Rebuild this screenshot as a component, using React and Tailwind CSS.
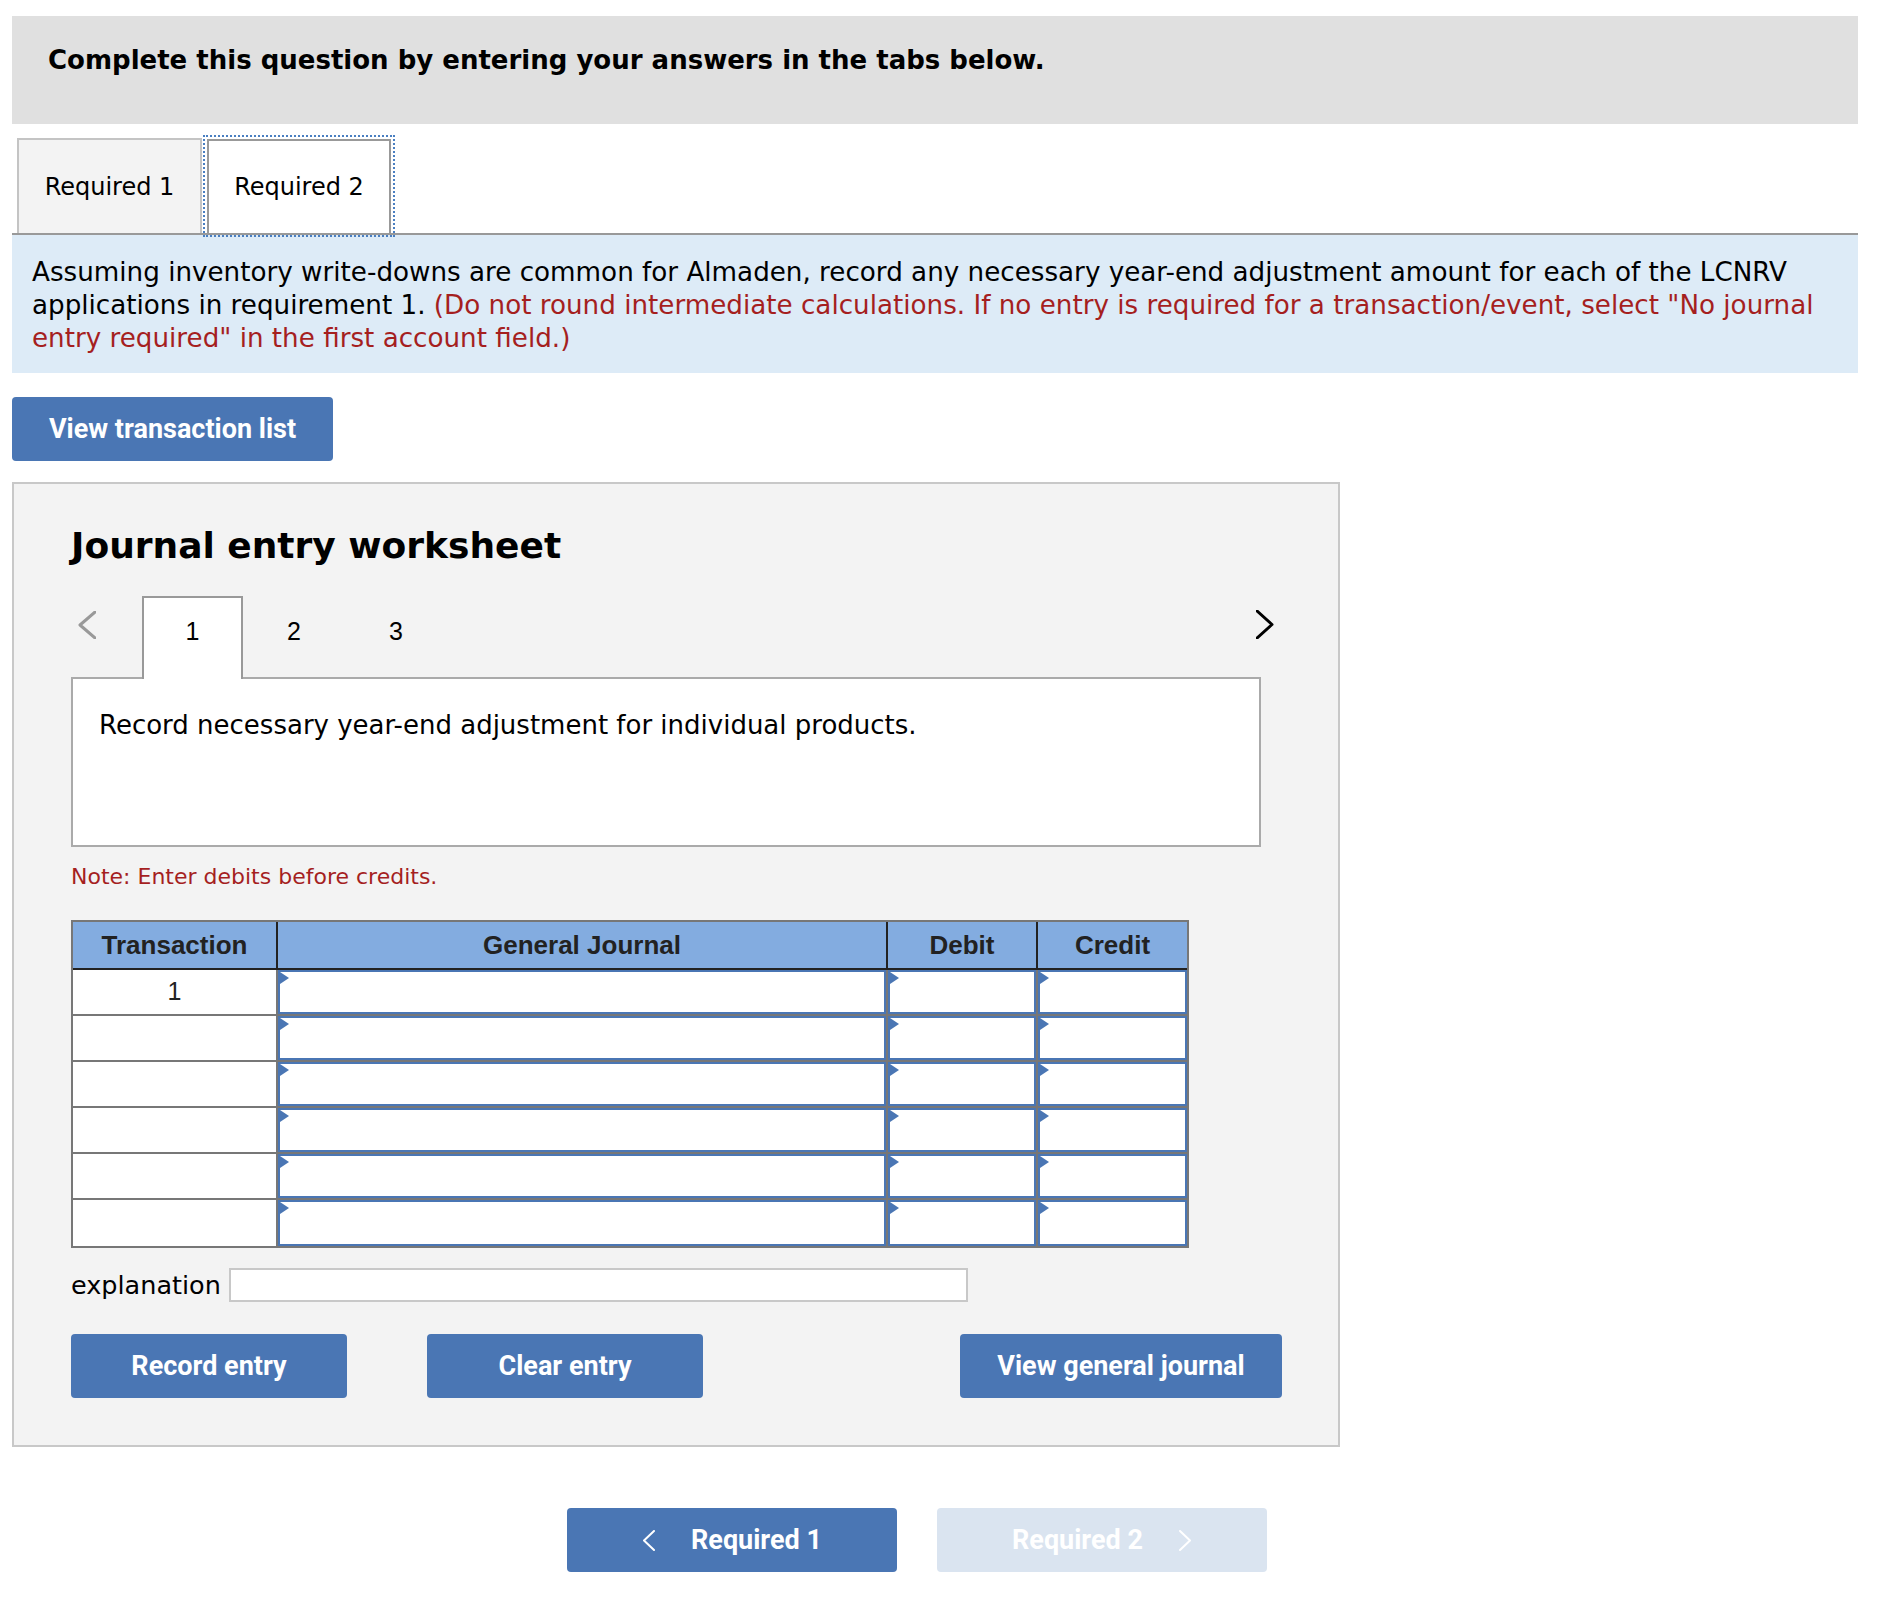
import React from 'react'

const BODY = "font-['DejaVu_Sans',Verdana,sans-serif]"
const BTN = "font-['Roboto',sans-serif] font-bold text-white text-[27px]"
const ARIAL = "font-['Liberation_Sans',Arial,sans-serif]"

function Chevron({ dir = 'left', className = '', w = 12, h = 20, sw = 2 }) {
  const d = dir === 'left'
    ? `M${w - 1} 1 L2 ${h / 2} L${w - 1} ${h - 1}`
    : `M1 1 L${w - 2} ${h / 2} L1 ${h - 1}`
  return (
    <svg width={w} height={h} viewBox={`0 0 ${w} ${h}`} className={className}>
      <path d={d} fill="none" stroke="currentColor" strokeWidth={sw} strokeLinecap="round" strokeLinejoin="round" />
    </svg>
  )
}

function InputCell({ width, last }) {
  return (
    <div className={`h-full bg-white ${last ? '' : 'border-r-2 border-[#777]'}`} style={{ width }}>
      <div className="relative h-full border-2 border-[#4a76b4] bg-white">
        <div className="absolute left-0 top-0 w-0 h-0 border-y-[6px] border-y-transparent border-l-[9px] border-l-[#4a76b4]" />
      </div>
    </div>
  )
}

function JournalTable() {
  const rows = [1, 2, 3, 4, 5, 6]
  return (
    <div className={`mt-[30px] w-[1118px] border-2 border-[#777] ${ARIAL}`}>
      <div className="flex h-[48px] bg-[#83ace0] border-b-2 border-[#222] text-[26px] font-bold text-[#222]">
        <div className="w-[205px] border-r-2 border-[#222] flex items-center justify-center">Transaction</div>
        <div className="w-[610px] border-r-2 border-[#222] flex items-center justify-center">General Journal</div>
        <div className="w-[150px] border-r-2 border-[#222] flex items-center justify-center">Debit</div>
        <div className="w-[149px] flex items-center justify-center">Credit</div>
      </div>
      {rows.map((r, i) => (
        <div key={r} className={`flex h-[46px] ${i < rows.length - 1 ? 'border-b-2 border-[#777]' : 'h-[44px]'}`}>
          <div className="w-[205px] h-full bg-white border-r-2 border-[#777] flex items-center justify-center text-[25px] text-[#222]">
            {i === 0 ? '1' : ''}
          </div>
          <InputCell width={610} />
          <InputCell width={150} />
          <InputCell width={149} last />
        </div>
      ))}
    </div>
  )
}

export default function App() {
  return (
    <div className={`min-h-[1602px] bg-white pl-[12px] pr-[20px] pt-[16px] pb-[29px] text-black ${BODY}`}>
      <div className="h-[108px] bg-[#e0e0e0] pl-[36px] pt-[29px] text-[26px] leading-[31px] font-bold">
        Complete this question by entering your answers in the tabs below.
      </div>

      <div className="mt-[14px] flex items-end pl-[5px] border-b-2 border-[#999] text-[24px]">
        <div className="w-[185px] h-[95px] bg-[#f3f3f3] border-2 border-b-0 border-[#c4c4c4] flex items-center justify-center">
          Required 1
        </div>
        <div className="ml-[5px] w-[184px] h-[94px] bg-white border-2 border-b-0 border-[#999] outline-2 outline-dotted outline-[#4a7fc1] outline-offset-[2px] flex items-center justify-center">
          Required 2
        </div>
      </div>

      <div className="bg-[#ddebf7] px-[20px] pt-[21px] pb-[18px] text-[26.2px] leading-[33px]">
        Assuming inventory write-downs are common for Almaden, record any necessary year-end adjustment amount for each of the LCNRV<br />
        applications in requirement 1. <span className="text-[#a51f1f]">(Do not round intermediate calculations. If no entry is required for a transaction/event, select "No journal<br />
        entry required" in the first account field.)</span>
      </div>

      <button className={`mt-[24px] w-[321px] h-[64px] rounded-[4px] bg-[#4a76b4] ${BTN}`}>
        View transaction list
      </button>

      <div className="mt-[21px] w-[1328px] border-2 border-[#c8c8c8] bg-[#f3f3f3] pl-[57px] pt-[40px] pb-[47px]">
        <div className="text-[36px] leading-[44px] font-bold">Journal entry worksheet</div>

        <div className={`mt-[28px] flex items-end w-[1205px] ${ARIAL} text-[25px]`}>
          <div className="w-[71px] h-[81px] flex items-start pt-[15px] pl-[7px] text-[#999]">
            <Chevron dir="left" w={18} h={28} sw={3} />
          </div>
          <div className="relative z-10 -mb-[2px] w-[101px] h-[83px] bg-white border-2 border-b-0 border-[#999] text-center pt-[18px] leading-[30px]">1</div>
          <div className="w-[102px] h-[81px] text-center pt-[20px] leading-[30px]">2</div>
          <div className="w-[102px] h-[81px] text-center pt-[20px] leading-[30px]">3</div>
          <div className="ml-auto h-[81px] pt-[14px] pr-[2px] text-black">
            <Chevron dir="right" w={18} h={29} sw={3} />
          </div>
        </div>

        <div className="w-[1190px] h-[170px] border-2 border-[#aaa] bg-white px-[26px] pt-[29px] text-[26px] leading-[34px]">
          Record necessary year-end adjustment for individual products.
        </div>

        <div className="mt-[17px] text-[22px] leading-[26px] text-[#a51f1f]">Note: Enter debits before credits.</div>

        <JournalTable />

        <div className="mt-[20px] flex items-center gap-[8px]">
          <div className="w-[150px] text-[25.5px] leading-[34px]">explanation</div>
          <div className="w-[739px] h-[34px] border-2 border-[#c8c8c8] bg-white" />
        </div>

        <div className="mt-[32px] flex">
          <button className={`w-[276px] h-[64px] rounded-[4px] bg-[#4a76b4] ${BTN}`}>Record entry</button>
          <button className={`ml-[80px] w-[276px] h-[64px] rounded-[4px] bg-[#4a76b4] ${BTN}`}>Clear entry</button>
          <button className={`ml-[257px] w-[322px] h-[64px] rounded-[4px] bg-[#4a76b4] ${BTN}`}>View general journal</button>
        </div>
      </div>

      <div className="mt-[61px] ml-[555px] flex gap-[40px]">
        <button className={`w-[330px] h-[64px] rounded-[4px] bg-[#4a76b4] flex items-center justify-center gap-[36px] ${BTN}`}>
          <Chevron dir="left" w={13} h={21} sw={2} />
          <span>Required 1</span>
        </button>
        <button className={`w-[330px] h-[64px] rounded-[4px] bg-[#dae4f0] flex items-center justify-center gap-[36px] ${BTN}`}>
          <span>Required 2</span>
          <Chevron dir="right" w={13} h={21} sw={2} />
        </button>
      </div>
    </div>
  )
}
